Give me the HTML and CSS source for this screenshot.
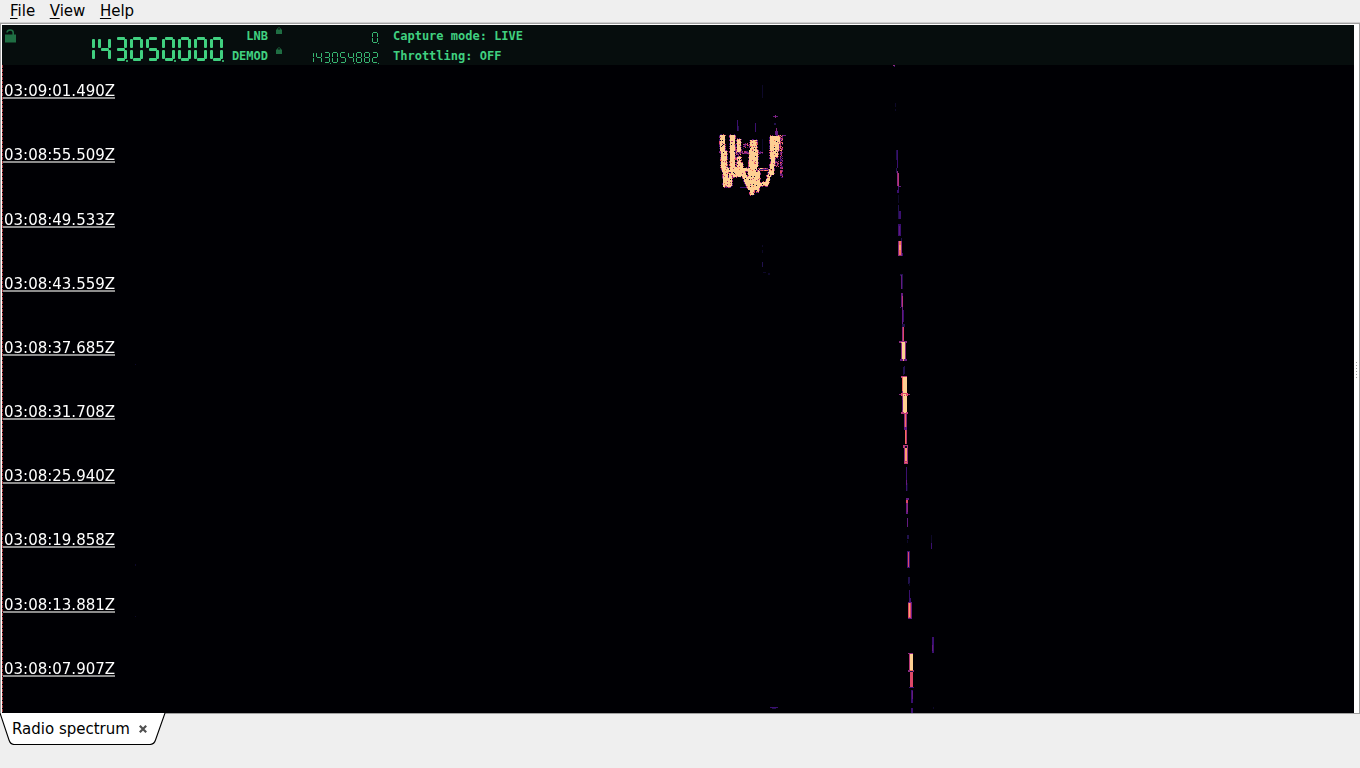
FILE: index.html
```html
<!DOCTYPE html>
<html lang="en">
<head>
    <meta charset="utf-8">
    <title>Radio spectrum</title>
    <link rel="stylesheet" href="styles.css">
</head>
<body>
    <nav class="menubar">
        <span class="menu"><u>F</u>ile</span>
        <span class="menu"><u>V</u>iew</span>
        <span class="menu"><u>H</u>elp</span>
    </nav>

    <div class="panel">
        <div class="spectrum">
            <div class="toolbar">
                <svg class="lock-main" width="13" height="14" viewBox="0 0 13 14">
                    <path d="M3 3.5 C3.5 .2 9 .2 9.2 3.5 V6" fill="none" stroke="#1f6e43" stroke-width="1.6"/>
                    <rect x="1" y="5.5" width="11" height="8" fill="#1f6e43"/>
                </svg>
                <div class="lcd lcd-big" data-value="143.050.000."></div>
                <div class="names">
                    <div>LNB</div>
                    <div>DEMOD</div>
                </div>
                <div class="locks">
                    <svg width="6" height="7" viewBox="0 0 6 7"><path d="M1.5 3V1.5Q3 -.3 4.5 1.5V3" fill="none" stroke="#1a5636"/><rect y="2.5" width="6" height="4.5" fill="#1f6e43"/></svg>
                    <svg width="6" height="7" viewBox="0 0 6 7"><path d="M1.5 3V1.5Q3 -.3 4.5 1.5V3" fill="none" stroke="#1a5636"/><rect y="2.5" width="6" height="4.5" fill="#1f6e43"/></svg>
                </div>
                <div class="values">
                    <div class="lcd lcd-small" data-value="0."></div>
                    <div class="lcd lcd-small" data-value="143.054.882."></div>
                </div>
                <div class="status">
                    <div>Capture mode: LIVE</div>
                    <div>Throttling: OFF</div>
                </div>
            </div>
            <div class="waterfall">
                <canvas id="waterfall" width="1352" height="648"></canvas>
                <div class="times">
                    <div><span>03:09:01.490Z</span></div>
                    <div><span>03:08:55.509Z</span></div>
                    <div><span>03:08:49.533Z</span></div>
                    <div><span>03:08:43.559Z</span></div>
                    <div><span>03:08:37.685Z</span></div>
                    <div><span>03:08:31.708Z</span></div>
                    <div><span>03:08:25.940Z</span></div>
                    <div><span>03:08:19.858Z</span></div>
                    <div><span>03:08:13.881Z</span></div>
                    <div><span>03:08:07.907Z</span></div>
                </div>
            </div>
        </div>
        <div class="splitter"><i></i><i></i><i></i><i></i><i></i><i></i></div>
    </div>

    <div class="tabbar">
        <div class="tab">
            <svg class="tab-shape" width="166" height="32" viewBox="0 0 166 32">
                <path d="M0 0 L9 27 Q10.5 31.5 14 31.5 H150 Q154 31.5 155.5 27 L165 0" fill="#fff" stroke="#000" stroke-width="1.1"/>
            </svg>
            <span class="tab-title">Radio spectrum</span>
            <svg class="tab-close" width="8" height="8" viewBox="0 0 8 8">
                <path d="M.8 .8L7.2 7.2M7.2 .8L.8 7.2" stroke="#505050" stroke-width="2.2"/>
            </svg>
        </div>
    </div>

    <script src="spectrum.js"></script>
</body>
</html>
```
FILE: styles.css
```css
body {
    margin: 0;
    height: 768px;
    overflow: hidden;
    display: flex;
    flex-direction: column;
    background: #efefef;
    color: #000;
    font-family: "DejaVu Sans", sans-serif;
    font-size: 15px;
}

.menubar {
    height: 22px;
    display: flex;
    gap: 14.6px;
    padding-left: 10px;
    line-height: 22px;
}

.menu u {
    text-underline-offset: 2px;
    text-decoration-thickness: 1px;
}

.panel {
    box-sizing: border-box;
    height: 691px;
    display: flex;
    background: #fff;
    border-left: 1px solid #a0a0a0;
    border-right: 1px solid #a0a0a0;
    border-top: 1px solid #a0a0a0;
    box-shadow: 0 -1px #cfcfcf;
    margin-top: 1px;
    padding: 1px 0 0 1px;
}

.spectrum {
    width: 1352px;
}

.toolbar {
    height: 40px;
    display: flex;
    background: #060d0d;
    color: #40d080;
    font: bold 12px/20px "DejaVu Sans Mono", monospace;
}

.lock-main {
    margin: 4px 0 0 1.5px;
}

.lcd {
    display: flex;
    justify-content: flex-end;
}

.lcd-big {
    --w: 13px;
    --h: 24px;
    --t: 3px;
    width: 206.5px;
    gap: 3px;
    padding-top: 12px;
}

.lcd-small {
    --w: 6.5px;
    --h: 11px;
    --t: 1.4px;
    gap: 1.5px;
}

/* the digit itself stays selectable, the segments are what lights up */
.digit {
    position: relative;
    width: var(--w);
    height: var(--h);
    overflow: visible;
    font-size: 9px;
    line-height: var(--h);
    color: transparent;
}

.seg {
    position: absolute;
    background: #40d080;
    border-radius: 1px;
}

.lcd-small .seg {
    background: #38b873;
    border-radius: .3px;
}

.seg.a, .seg.g, .seg.d {
    left: var(--t);
    right: var(--t);
    height: var(--t);
}

.lcd-big .a, .lcd-big .g, .lcd-big .d {
    left: 2.5px;
    right: 2.5px;
}

.seg.a { top: 0; }
.seg.g { top: calc(50% - var(--t) / 2); }
.seg.d { bottom: 0; }

.seg.b, .seg.c, .seg.e, .seg.f {
    width: var(--t);
    height: calc(50% - var(--t) * 1.1);
}

.seg.b, .seg.f { top: calc(var(--t) * .8); }
.seg.c, .seg.e { bottom: calc(var(--t) * .8); }
.seg.b, .seg.c { right: 0; }
.seg.e, .seg.f { left: 0; }

.seg.p {
    width: 2px;
    height: 2px;
    right: -1px;
    bottom: -1px;
}

.lcd-small .p {
    width: 1px;
    height: 1px;
}

.names {
    width: 45px;
    text-align: right;
    padding-top: 1px;
}

.locks {
    display: flex;
    flex-direction: column;
    gap: 13px;
    width: 6px;
    margin: 2px 0 0 8px;
}

.values {
    display: flex;
    flex-direction: column;
    gap: 9px;
    width: 96px;
    padding-top: 7px;
}

.status {
    margin-left: 15px;
    padding-top: 1px;
    white-space: nowrap;
}

.waterfall {
    position: relative;
    height: 648px;
    background: #000004;
    overflow: hidden;
}

.waterfall canvas {
    display: block;
}

.times {
    position: absolute;
    left: 1px;
    top: 0;
    color: #fff;
}

.times div {
    box-sizing: border-box;
    width: 112px;
    height: 64px;
    display: flex;
    align-items: flex-end;
    border-bottom: 2px solid #8c8c8c;
    padding-left: 1px;
    line-height: 12px;
}

.times div:first-child {
    height: 34px;
}

.times div:nth-child(3),
.times div:nth-child(9) {
    height: 65px;
}

.splitter {
    width: 5px;
    display: flex;
    flex-direction: column;
    align-items: center;
    justify-content: center;
    gap: 2px;
}

.splitter i {
    width: 1px;
    height: 1px;
    background: #a0a0a0;
}

.tabbar {
    box-sizing: border-box;
    height: 55px;
    margin-top: -1px;
    border-top: 1px solid #a0a0a0;
}

.tab {
    position: relative;
    width: 166px;
    height: 32px;
    display: flex;
    align-items: center;
    margin-top: -1px;
}

.tab-shape {
    position: absolute;
    left: 0;
    top: 0;
}

.tab-title {
    position: relative;
    margin-left: 12px;
}

.tab-close {
    position: relative;
    margin-left: 9px;
}
```
FILE: spectrum.js
```js
// seven segment readouts
const SEGMENTS = {
    0: 'abcdef', 1: 'bc', 2: 'abged', 3: 'abgcd', 4: 'fgbc',
    5: 'afgcd', 6: 'afgedc', 7: 'abc', 8: 'abcdefg', 9: 'abcdfg'
};

document.querySelectorAll('.lcd').forEach(lcd => {
    let digit;
    for (const ch of lcd.dataset.value) {
        if (ch !== '.') {
            digit = document.createElement('span');
            digit.className = 'digit';
            digit.textContent = ch;
            lcd.appendChild(digit);
        }
        for (const name of ch === '.' ? 'p' : SEGMENTS[ch]) {
            const seg = document.createElement('i');
            seg.className = 'seg ' + name;
            digit.appendChild(seg);
        }
    }
});

const canvas = document.getElementById('waterfall');
const ctx = canvas.getContext('2d');
// use window coordinates below
ctx.translate(-2, -65);

const MAP = ['#000004', '#0d0829', '#21114e', '#3b0f70', '#641a80', '#8c2981', '#b73779', '#de4968', '#f7705c', '#fe9f6d', '#fecf92'];

let seed = 71;
function rnd() {
    seed = (seed * 16807) % 2147483647;
    return seed / 2147483647;
}

function put(x, y, w, h, level) {
    ctx.fillStyle = MAP[level];
    ctx.fillRect(x, y, w, h);
}

// drifting carrier: x, y, width, height, level
const trail = [
    [893, 65, 2, 1, 5], [894, 66, 1, 1, 3], [895, 103, 1, 4, 1], [895, 109, 1, 2, 1],
    [896, 150, 1, 10, 2], [897, 150, 1, 18, 3], [896, 168, 1, 5, 2],
    [897, 171, 1, 15, 5], [898, 173, 1, 13, 6], [898, 186, 3, 1, 4], [898, 187, 1, 6, 3], [897, 190, 1, 3, 3],
    [898, 195, 1, 8, 1], [898, 205, 1, 14, 2], [899, 211, 2, 8, 3],
    [898, 224, 3, 12, 3], [899, 226, 1, 9, 4], [901, 238, 1, 3, 2],
    [898, 241, 4, 15, 5], [899, 241, 2, 14, 8], [899, 245, 2, 5, 9], [902, 253, 1, 3, 3],
    [900, 274, 3, 2, 2], [901, 275, 1, 14, 4], [902, 276, 1, 13, 2],
    [901, 293, 2, 14, 4], [902, 296, 1, 11, 6], [900, 307, 1, 1, 3], [902, 307, 1, 17, 4], [903, 310, 1, 12, 3],
    [902, 324, 3, 3, 2], [902, 327, 1, 14, 5], [903, 327, 1, 14, 7],
    [899, 341, 8, 2, 5], [901, 342, 4, 1, 9], [901, 343, 5, 16, 5], [902, 342, 3, 19, 10], [900, 359, 7, 2, 4], [903, 359, 1, 2, 9],
    [903, 367, 1, 8, 2], [904, 366, 1, 8, 2],
    [901, 376, 6, 2, 6], [902, 378, 5, 35, 5], [903, 377, 4, 36, 10], [902, 377, 1, 14, 8],
    [899, 394, 11, 1, 5], [901, 393, 7, 3, 7], [903, 394, 3, 2, 10], [904, 395, 1, 1, 6], [902, 400, 1, 10, 4],
    [901, 412, 7, 2, 6], [904, 412, 2, 1, 10], [904, 414, 3, 15, 5], [905, 414, 1, 14, 8],
    [904, 427, 3, 3, 4], [905, 430, 1, 14, 8], [906, 430, 1, 14, 6], [903, 445, 5, 3, 6], [905, 446, 2, 2, 1],
    [904, 448, 4, 14, 5], [905, 448, 2, 14, 9], [904, 461, 4, 3, 6], [905, 462, 2, 1, 8],
    [906, 467, 1, 24, 3], [906, 480, 1, 5, 4], [907, 483, 1, 8, 1],
    [906, 498, 3, 2, 4], [906, 500, 2, 14, 4], [906, 500, 2, 3, 7], [907, 503, 1, 9, 5],
    [907, 518, 1, 9, 4], [907, 535, 2, 4, 2], [907, 540, 1, 3, 1],
    [907, 551, 3, 17, 3], [908, 552, 1, 15, 7], [908, 577, 2, 7, 2], [909, 583, 1, 3, 1],
    [909, 590, 1, 12, 3], [910, 598, 1, 4, 3], [908, 602, 4, 17, 4], [908, 603, 3, 15, 7], [909, 603, 1, 14, 9],
    [908, 653, 5, 1, 5], [909, 654, 4, 16, 6], [910, 654, 3, 16, 10], [908, 670, 6, 2, 5], [910, 670, 3, 1, 8], [910, 671, 3, 1, 2],
    [910, 672, 3, 15, 7], [909, 687, 5, 1, 3], [911, 690, 2, 13, 3], [912, 691, 1, 8, 4], [911, 708, 2, 5, 3],
    [931, 535, 1, 10, 1], [931, 543, 1, 6, 3], [932, 637, 2, 16, 3], [932, 645, 1, 6, 4], [933, 707, 1, 2, 1],
    [762, 85, 1, 13, 1], [762, 245, 1, 2, 1], [762, 250, 1, 3, 1], [762, 262, 1, 5, 2], [763, 272, 3, 1, 1], [768, 273, 2, 2, 1],
    [770, 707, 8, 1, 3], [772, 708, 4, 1, 2],
    [135, 364, 1, 1, 1], [135, 564, 1, 2, 1], [135, 616, 1, 1, 1]
];
trail.forEach(t => put(...t));

// strong echo, hot core with a ragged cooler border
const core = new Set();
function solid(x, y, w, h) {
    for (let j = y; j < y + h; j++)
        for (let i = x; i < x + w; i++) core.add(i + ',' + j);
}
function line(x1, y1, x2, y2, w) {
    const n = Math.max(Math.abs(x2 - x1), Math.abs(y2 - y1));
    for (let k = 0; k <= n; k++)
        solid(Math.round(x1 + (x2 - x1) * k / n), Math.round(y1 + (y2 - y1) * k / n), w, 3);
}

function speckle(x, y, w, h, density, low, high) {
    for (let j = y; j < y + h; j++)
        for (let i = x; i < x + w; i++)
            if (rnd() < density) put(i, j, 1, 1, low + Math.floor(rnd() * (high - low + 1)));
}
speckle(719, 151, 44, 3, .6, 3, 6);
speckle(736, 151, 6, 8, .6, 4, 9);
speckle(743, 143, 8, 6, .55, 3, 8);
speckle(724, 168, 44, 3, .8, 5, 10);
speckle(778, 135, 5, 16, .75, 4, 9);
speckle(780, 151, 3, 27, .7, 3, 7);
speckle(773, 158, 6, 9, .5, 3, 7);
speckle(723, 185, 9, 3, .5, 4, 7);

[
    [720, 135, 5, 16], [721, 151, 6, 17], [723, 167, 5, 12], [723, 178, 8, 9], [722, 168, 9, 4],
    [730, 135, 5, 33], [731, 167, 12, 10], [729, 173, 3, 13],
    [737, 139, 4, 13], [737, 157, 4, 19], [738, 163, 5, 9], [741, 168, 8, 3],
    [750, 140, 7, 10], [749, 150, 9, 17], [749, 167, 8, 5], [748, 171, 12, 17], [748, 186, 8, 4], [750, 190, 4, 5], [756, 187, 3, 5],
    [770, 136, 4, 23], [773, 136, 7, 8], [773, 144, 5, 13], [776, 136, 3, 15], [769, 169, 5, 6]
].forEach(r => solid(...r));
line(741, 171, 747, 185, 4);
line(758, 183, 765, 182, 3);
line(765, 183, 769, 170, 3);
line(771, 157, 770, 169, 4);

for (const key of core) {
    const [x, y] = key.split(',').map(Number);
    [[-1, 0], [1, 0], [0, -1], [0, 1]].forEach(([dx, dy]) => {
        if (!core.has((x + dx) + ',' + (y + dy)) && rnd() < .65)
            put(x + dx, y + dy, 1, 1, 2 + Math.floor(rnd() * 6));
    });
}
for (const key of core) {
    const [x, y] = key.split(',').map(Number);
    const r = rnd();
    put(x, y, 1, 1, r < .02 ? 1 : r < .05 ? 6 : r < .08 ? 8 : 10);
}

put(783, 135, 3, 1, 4);
put(737, 120, 1, 11, 3);
put(738, 126, 1, 5, 2);
put(755, 123, 1, 9, 3);
put(762, 139, 1, 13, 1);
put(760, 169, 8, 1, 3);
put(740, 187, 6, 1, 3);
put(773, 116, 5, 1, 4);
put(775, 115, 1, 3, 5);
put(774, 123, 2, 2, 2);
put(776, 128, 1, 7, 5);
put(775, 131, 3, 4, 4);

// left frequency marker
for (let y = 65; y < 713; y += 4) {
    ctx.fillStyle = '#a83c40';
    ctx.fillRect(2, y, 1, 3);
}
```
